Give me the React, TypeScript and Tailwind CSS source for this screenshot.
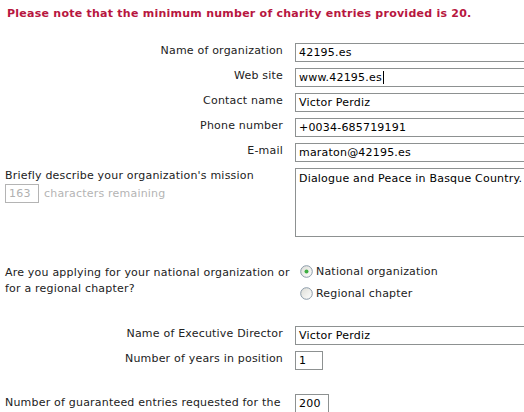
import React from "react";

const font = { fontFamily: '"DejaVu Sans", Verdana, sans-serif' };

function Box({ children, w = "w-[260px]", h = "h-[19px]" }: { children?: React.ReactNode; w?: string; h?: string }) {
  return (
    <div className={`${w} ${h} shrink-0 border border-[#8d9191] bg-white pl-[3px] flex items-center text-[11px] text-black leading-none whitespace-nowrap overflow-hidden`}>
      {children}
    </div>
  );
}

function Row({ label, children }: { label: string; children: React.ReactNode }) {
  return (
    <div className="flex h-[25px]">
      <div className="w-[278px] shrink-0 text-right text-[11px] text-[#222] leading-[13px] pt-[1px] whitespace-nowrap">{label}</div>
      <div className="ml-[12px]">{children}</div>
    </div>
  );
}

function Radio({ checked }: { checked?: boolean }) {
  return (
    <svg width="13" height="13" viewBox="0 0 13 13" className="shrink-0">
      <defs>
        <linearGradient id={checked ? "g1" : "g2"} x1="0" y1="0" x2="1" y2="1">
          <stop offset="0" stopColor="#dcdcd6" />
          <stop offset="1" stopColor="#ffffff" />
        </linearGradient>
      </defs>
      <circle cx="6.5" cy="6.5" r="5.8" fill={`url(#${checked ? "g1" : "g2"})`} stroke="#8a9aa8" strokeWidth="1" />
      {checked && <circle cx="6.5" cy="6.5" r="2" fill="#3fae42" />}
    </svg>
  );
}

export default function App() {
  return (
    <div className="w-[524px] h-[412px] overflow-hidden bg-white pl-[5px] tracking-[0.2px]" style={font}>
      <div className="pt-[7px] pl-[2px] text-[11px] font-bold text-[#b7163f] leading-[13px] whitespace-nowrap tracking-[0.25px]">
        Please note that the minimum number of charity entries provided is 20.
      </div>

      <div className="mt-[23px] flex flex-col">
        <Row label="Name of organization">
          <Box>42195.es</Box>
        </Row>
        <Row label="Web site">
          <Box>
            www.42195.es<span className="inline-block w-[1px] h-[13px] bg-black ml-[1px]" />
          </Box>
        </Row>
        <Row label="Contact name">
          <Box>Victor Perdiz</Box>
        </Row>
        <Row label="Phone number">
          <Box>+0034-685719191</Box>
        </Row>
        <Row label="E-mail">
          <Box>maraton@42195.es</Box>
        </Row>

        <div className="flex">
          <div className="w-[278px] shrink-0 text-[11px] text-[#222] leading-[13px] pt-[1px] whitespace-nowrap">
            <div>Briefly describe your organization's mission</div>
            <div className="mt-[2px] flex items-center">
              <div className="w-[34px] h-[19px] border border-[#b4b4b4] pl-[3px] flex items-center text-[11px] text-[#b0b0b0]">163</div>
              <span className="ml-[5px] text-[#b4b4b4]">characters remaining</span>
            </div>
          </div>
          <div className="ml-[12px] w-[260px] h-[69px] shrink-0 border border-[#8d9191] bg-white pl-[3px] pt-[3px] text-[11px] text-black leading-[13px] whitespace-nowrap overflow-hidden">
            Dialogue and Peace in Basque Country.
          </div>
        </div>

        <div className="mt-[28px] flex">
          <div className="w-[278px] shrink-0 text-[11px] text-[#222] leading-[16px] whitespace-nowrap">
            Are you applying for your national organization or
            <br />
            for a regional chapter?
          </div>
          <div className="ml-[17px] flex flex-col gap-[9px] text-[11px] text-[#222] leading-[13px] whitespace-nowrap">
            <div className="flex items-center gap-[3px]">
              <Radio checked />
              <span>National organization</span>
            </div>
            <div className="flex items-center gap-[3px]">
              <Radio />
              <span>Regional chapter</span>
            </div>
          </div>
        </div>

        <div className="mt-[26px] flex flex-col">
          <Row label="Name of Executive Director">
            <Box>Victor Perdiz</Box>
          </Row>
          <Row label="Number of years in position">
            <Box w="w-[28px]">1</Box>
          </Row>
        </div>

        <div className="mt-[18px] flex">
          <div className="w-[278px] shrink-0 text-[11px] text-[#222] leading-[16px] whitespace-nowrap pt-[1px]">
            Number of guaranteed entries requested for the
            <br />
            2009 ING New York City Marathon
          </div>
          <div className="ml-[12px]">
            <Box w="w-[34px]">200</Box>
          </div>
        </div>
      </div>
    </div>
  );
}
